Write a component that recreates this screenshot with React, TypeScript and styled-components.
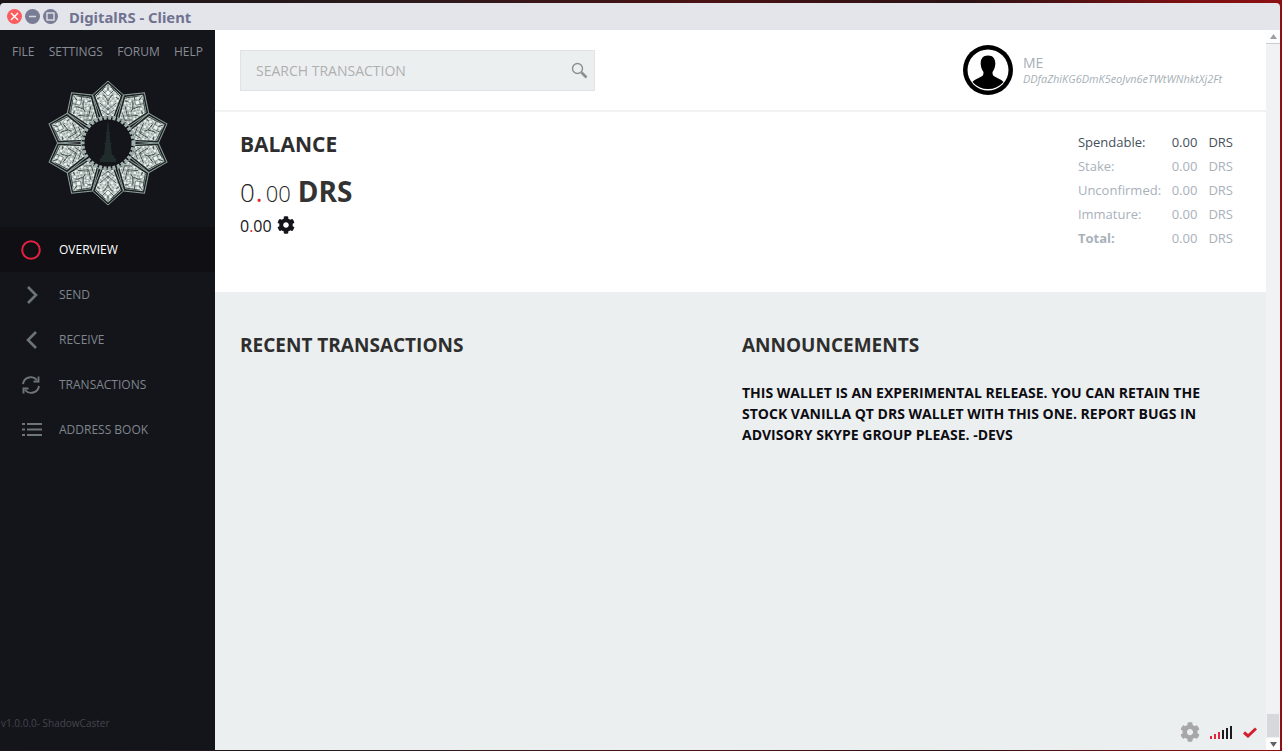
import { Fragment } from 'react';
import styled, { createGlobalStyle } from 'styled-components';
import { FaCog } from 'react-icons/fa';

const GlobalStyle = createGlobalStyle`
  html, body {
    margin: 0;
    padding: 0;
    height: 100%;
    overflow: hidden;
    background: #1d1416;
  }
  * {
    box-sizing: border-box;
  }
`;

const Desktop = styled.div`
  width: 1282px;
  height: 751px;
  padding: 3px 2px 1px 0;
  display: flex;
  background: linear-gradient(90deg, #1c1517 0%, #2a1a1c 30%, #4a1214 55%, #2a1214 75%, #7a1012 92%, #8c1014 100%);
  font-family: 'Open Sans', 'Noto Sans', sans-serif;
`;

const Window = styled.div`
  flex: 1;
  display: flex;
  flex-direction: column;
  min-width: 0;
  border-radius: 4px 4px 0 0;
  overflow: hidden;
`;

const TitleBar = styled.div`
  height: 27px;
  flex: none;
  display: flex;
  align-items: center;
  padding-left: 7px;
  background: #e4e5ea;
`;

const WinButton = styled.div<{ $color: string }>`
  width: 15px;
  height: 15px;
  margin-right: 3px;
  border-radius: 50%;
  background: ${({ $color }) => $color};
  display: flex;
  align-items: center;
  justify-content: center;
`;

const WinTitle = styled.span`
  margin-left: 8px;
  font-family: 'Noto Sans', 'Open Sans', sans-serif;
  font-weight: 700;
  font-size: 14.8px;
  color: #6f7290;
`;

const Columns = styled.div`
  flex: 1;
  display: flex;
  min-height: 0;
`;

const Sidebar = styled.aside`
  width: 215px;
  flex: none;
  display: flex;
  flex-direction: column;
  background: #14141b;
`;

const TopMenu = styled.div`
  display: flex;
  justify-content: space-between;
  padding: 14px 12px 0;
  font-size: 12px;
  line-height: 16px;
  color: #878d94;
`;

const LogoWrap = styled.div`
  height: 161px;
  padding-top: 20px;
  padding-left: 45px;
`;

const Nav = styled.nav`
  display: flex;
  flex-direction: column;
  margin-top: 6px;
`;

const NavRow = styled.div<{ $active?: boolean }>`
  height: 45px;
  display: flex;
  align-items: center;
  font-size: 12px;
  background: ${({ $active }) => ($active ? '#0f0f14' : 'transparent')};
  color: ${({ $active }) => ($active ? '#ffffff' : '#7f868c')};
`;

const NavIcon = styled.div`
  width: 59px;
  padding-left: 21px;
  display: flex;
  align-items: center;
`;

const Version = styled.div`
  margin-top: auto;
  padding: 0 0 20px 1px;
  font-size: 10px;
  line-height: 14px;
  color: #45464c;
`;

const Main = styled.main`
  flex: 1;
  min-width: 0;
  display: flex;
  flex-direction: column;
  background: #eceff0;
`;

const Header = styled.header`
  height: 82px;
  flex: none;
  display: flex;
  align-items: center;
  justify-content: space-between;
  padding: 0 0 0 25px;
  background: #fff;
  border-bottom: 2px solid #f1f2f2;
`;

const SearchBox = styled.div`
  width: 355px;
  height: 41px;
  display: flex;
  align-items: center;
  padding: 0 6px 0 15px;
  background: #eceff0;
  border: 1px solid #e0e2e3;
`;

const SearchInput = styled.input`
  flex: 1;
  min-width: 0;
  padding: 0;
  border: none;
  outline: none;
  background: transparent;
  font-family: inherit;
  font-size: 14px;
  color: #aaaaaa;

  &::placeholder {
    color: #aeb0b1;
    opacity: 1;
  }
`;

const Account = styled.div`
  width: 303px;
  display: flex;
  align-items: center;
`;

const AccountText = styled.div`
  margin-left: 10px;
  margin-top: -1px;
`;

const AccountName = styled.div`
  font-size: 14px;
  line-height: 17px;
  color: #a6b0b5;
`;

const AccountAddress = styled.div`
  font-size: 10.95px;
  line-height: 15px;
  font-style: italic;
  color: #a6b0b5;
`;

const BalancePanel = styled.section`
  height: 180px;
  flex: none;
  display: flex;
  justify-content: space-between;
  padding: 18px 33px 0 25px;
  background: #fff;
`;

const SectionTitle = styled.h2`
  margin: 0;
  font-size: 19px;
  line-height: 27px;
  font-weight: 700;
  color: #2e2e2e;
`;

const BalanceTitle = styled(SectionTitle)`
  font-size: 21px;
  line-height: 28px;
`;

const BalanceValue = styled.div`
  margin-top: 14px;
  display: flex;
  align-items: baseline;
  line-height: 38px;
  color: #222;
`;

const BigDigit = styled.span`
  font-size: 26px;
  font-weight: 300;
`;

const RedDot = styled.span`
  font-size: 26px;
  font-weight: 400;
  color: #e8222c;
  margin: 0 3px 0 1px;
`;

const SmallDigits = styled.span`
  font-size: 22px;
  font-weight: 300;
`;

const Unit = styled.span`
  margin-left: 7px;
  font-size: 28px;
  font-weight: 700;
  color: #333;
`;

const FiatRow = styled.div`
  display: flex;
  align-items: center;
  margin-top: 2px;
  font-size: 16px;
  line-height: 24px;
  color: #14141b;
`;

const FiatRed = styled.span`
  color: #e8222c;
`;

const FiatGear = styled(FaCog)`
  margin-left: 5px;
  width: 18px;
  height: 18px;
  margin-top: -2px;
`;

const Stats = styled.div`
  display: grid;
  grid-template-columns: 84.5px 35px auto;
  grid-auto-rows: 24px;
  align-items: center;
  font-size: 13px;
`;

const StatCell = styled.div<{ $strong?: boolean; $bold?: boolean; $right?: boolean; $unit?: boolean }>`
  padding-left: ${({ $unit }) => ($unit ? '11px' : '0')};
  color: ${({ $strong }) => ($strong ? '#45505a' : '#a9b1bb')};
  font-weight: ${({ $bold }) => ($bold ? 700 : 400)};
  text-align: ${({ $right }) => ($right ? 'right' : 'left')};
`;

const Lower = styled.section`
  flex: 1;
  min-height: 0;
  display: flex;
  flex-direction: column;
  padding: 40px 0 0 25px;
`;

const LowerColumns = styled.div`
  display: grid;
  grid-template-columns: 502px 480px;
`;

const Notice = styled.p`
  margin: 23px 0 0;
  font-size: 14px;
  line-height: 21px;
  font-weight: 700;
  color: #0c0c12;
`;

const StatusBar = styled.div`
  margin-top: auto;
  padding: 0 9px 8px 0;
  display: flex;
  align-items: center;
  justify-content: flex-end;
`;

const StatusGear = styled(FaCog)`
  width: 20px;
  height: 20px;
  color: #a7a7a7;
`;

const Signal = styled.div`
  display: flex;
  align-items: flex-end;
  gap: 2px;
  height: 14px;
  margin: 0 11px 0 10px;
`;

const SignalBar = styled.span<{ $on?: boolean; $height: number }>`
  width: 2px;
  height: ${({ $height }) => $height}px;
  background: ${({ $on }) => ($on ? '#e5243f' : '#1a1a22')};
`;

const Scrollbar = styled.div`
  width: 14px;
  flex: none;
  display: flex;
  flex-direction: column;
  background: #f1f2f3;
`;

const ScrollButton = styled.div`
  height: 14px;
  flex: none;
  display: flex;
  align-items: center;
  justify-content: center;
  background: #fdfdfd;
  border-bottom: 1px solid #c8ced1;
`;

const ScrollThumb = styled.div`
  height: 25px;
  flex: none;
  margin-top: auto;
  background: #d5d9dc;
  border: 1px solid #eef0f1;
`;

const ScrollButtonBottom = styled(ScrollButton)`
  height: 12px;
  border-bottom: none;
`;

const petalShape = 'M0 -59.5 L13 -47.5 L5.5 -27 L-5.5 -27 L-13 -47.5 Z';

// dark ornament lines on each petal, mirrored round the axis
const petalLines = [
  'M-12 -47 L-3 -56 M12 -47 L3 -56',
  'M-6 -53 L0 -47 L6 -53',
  'M-11 -44 L-4 -48 L0 -42 L4 -48 L11 -44',
  'M-8 -40 L0 -33 L8 -40',
  'M-6 -33 L0 -28 L6 -33',
  'M0 -58 L0 -52 M0 -42 L0 -34',
];

const petalSpots = [
  [0, -50, 3],
  [-7, -47, 2.4],
  [7, -47, 2.4],
  [-4, -40, 2.4],
  [4, -40, 2.4],
  [0, -37, 1.8],
  [0, -31, 2],
];

const Logo = () => (
  <svg width="126" height="126" viewBox="-63 -63 126 126">
    <defs>
      <pattern id="petalGrain" width="3.4" height="3.4" patternUnits="userSpaceOnUse" patternTransform="rotate(45)">
        <rect width="3.4" height="3.4" fill="#c5d0cc" />
        <rect width="1.7" height="1.7" fill="#f2f6f4" />
        <rect x="2.2" y="2.2" width="1" height="1" fill="#4f5f5b" />
      </pattern>
    </defs>
    {Array.from({ length: 10 }).map((_, i) => (
      <g key={i} transform={`rotate(${i * 36})`}>
        <path d="M0 -62 L15.5 -48 L7 -26 L-7 -26 L-15.5 -48 Z" fill="#1b2221" stroke="#8fa09c" strokeWidth="1" />
        <path d={petalShape} fill="url(#petalGrain)" />
        {petalLines.map((d) => (
          <path key={d} d={d} fill="none" stroke="#3d4a48" strokeWidth="0.9" />
        ))}
        {petalSpots.map(([x, y, r]) => (
          <path
            key={`${x}${y}`}
            d={`M${x} ${y - r} L${x + r} ${y} L${x} ${y + r} L${x - r} ${y} Z`}
            fill="#eef3f1"
            stroke="#6f817c"
            strokeWidth="0.5"
          />
        ))}
      </g>
    ))}
    <circle r="25.5" fill="none" stroke="#9fb0ab" strokeWidth="4" strokeDasharray="3 1.6" />
    <circle r="23" fill="#14141b" />
    <path
      d="M-0.6 -20 L0.6 -20 L1.2 -11 L2.2 -11 L2.2 -9.5 L1.6 -9.5 L2.4 0 L3.6 0 L3.6 1.6 L2.8 1.6 L4 12 L6 12 L6 15 L8 15 L8 19 L-8 19 L-8 15 L-6 15 L-6 12 L-4 12 L-2.8 1.6 L-3.6 1.6 L-3.6 0 L-2.4 0 L-1.6 -9.5 L-2.2 -9.5 L-2.2 -11 L-1.2 -11 Z"
      fill="#202c2b"
    />
  </svg>
);

const RingIcon = () => (
  <svg width="20" height="20" viewBox="0 0 20 20">
    <circle cx="10" cy="10" r="8.8" fill="none" stroke="#e0213f" strokeWidth="2" />
  </svg>
);

const ChevronIcon = ({ left }: { left?: boolean }) => (
  <svg width="22" height="20" viewBox="0 0 22 20">
    <path d={left ? 'M15 2 L7 10 L15 18' : 'M7 2 L15 10 L7 18'} fill="none" stroke="#6c7579" strokeWidth="2.6" />
  </svg>
);

const SyncIcon = () => (
  <svg width="20" height="20" viewBox="1 0 20 20" fill="none" stroke="#6c7579" strokeWidth="1.9">
    <path d="M3 9 A8 8 0 0 1 17 5" />
    <path d="M18.5 1.5 L18.5 6.5 L13.5 6.5" />
    <path d="M19 11 A8 8 0 0 1 5 15" />
    <path d="M3.5 18.5 L3.5 13.5 L8.5 13.5" />
  </svg>
);

const ListIcon = () => (
  <svg width="22" height="14" viewBox="0 0 22 14" fill="#6c7579">
    <rect x="1" y="0" width="3" height="2" />
    <rect x="6" y="0" width="15" height="2" />
    <rect x="1" y="5.5" width="3" height="2" />
    <rect x="6" y="5.5" width="15" height="2" />
    <rect x="1" y="11" width="3" height="2" />
    <rect x="6" y="11" width="15" height="2" />
  </svg>
);

const SearchGlyph = () => (
  <svg width="17" height="17" viewBox="0 0 17 17" fill="none" stroke="#8c8f90">
    <circle cx="6.5" cy="6.5" r="5" strokeWidth="1.4" />
    <path d="M10.5 10.5 L15.5 15.5" strokeWidth="2.6" />
  </svg>
);

const Avatar = () => (
  <svg width="50" height="50" viewBox="0 0 50 50">
    <circle cx="25" cy="25" r="25" fill="#000" />
    <circle cx="25" cy="25" r="20.5" fill="#fff" />
    <path
      d="M25 10.5 C19.5 10.5 17.4 14.5 17.7 19 C17.9 22 18.8 24.5 20.2 26.5 C20.7 27.5 20.6 29.5 19.8 30.5 C18 32.5 12.5 33.5 9.5 37 A20.5 20.5 0 0 0 40.5 37 C37.5 33.5 32 32.5 30.2 30.5 C29.4 29.5 29.3 27.5 29.8 26.5 C31.2 24.5 32.1 22 32.3 19 C32.6 14.5 30.5 10.5 25 10.5 Z"
      fill="#000"
    />
  </svg>
);

const CheckIcon = () => (
  <svg width="14" height="11" viewBox="0 0 14 11">
    <path d="M1 5.5 L5 9 L13 1.5" fill="none" stroke="#d3202f" strokeWidth="3" />
  </svg>
);

const navItems = [
  { label: 'OVERVIEW', icon: <RingIcon />, active: true },
  { label: 'SEND', icon: <ChevronIcon /> },
  { label: 'RECEIVE', icon: <ChevronIcon left /> },
  { label: 'TRANSACTIONS', icon: <SyncIcon /> },
  { label: 'ADDRESS BOOK', icon: <ListIcon /> },
];

const stats = [
  { label: 'Spendable:', strong: true },
  { label: 'Stake:' },
  { label: 'Unconfirmed:' },
  { label: 'Immature:' },
  { label: 'Total:', bold: true },
];

const App = () => (
  <Desktop>
    <GlobalStyle />
    <Window>
      <TitleBar>
        <WinButton $color="#fb5d5f">
          <svg width="9" height="9" viewBox="0 0 9 9">
            <path d="M1 1 L8 8 M8 1 L1 8" stroke="#fff" strokeWidth="1.4" />
          </svg>
        </WinButton>
        <WinButton $color="#787c94">
          <svg width="9" height="9" viewBox="0 0 9 9">
            <path d="M1 4.5 L8 4.5" stroke="#d8d9e0" strokeWidth="1.6" />
          </svg>
        </WinButton>
        <WinButton $color="#787c94">
          <svg width="9" height="9" viewBox="0 0 9 9">
            <rect x="1" y="1" width="7" height="7" fill="none" stroke="#e0e1e8" strokeWidth="1.4" />
          </svg>
        </WinButton>
        <WinTitle>DigitalRS - Client</WinTitle>
      </TitleBar>
      <Columns>
        <Sidebar>
          <TopMenu>
            <span>FILE</span>
            <span>SETTINGS</span>
            <span>FORUM</span>
            <span>HELP</span>
          </TopMenu>
          <LogoWrap>
            <Logo />
          </LogoWrap>
          <Nav>
            {navItems.map((item) => (
              <NavRow key={item.label} $active={item.active}>
                <NavIcon>{item.icon}</NavIcon>
                {item.label}
              </NavRow>
            ))}
          </Nav>
          <Version>v1.0.0.0- ShadowCaster</Version>
        </Sidebar>
        <Main>
          <Header>
            <SearchBox>
              <SearchInput placeholder="SEARCH TRANSACTION" readOnly />
              <SearchGlyph />
            </SearchBox>
            <Account>
              <Avatar />
              <AccountText>
                <AccountName>ME</AccountName>
                <AccountAddress>DDfaZhiKG6DmK5eoJvn6eTWtWNhktXj2Ft</AccountAddress>
              </AccountText>
            </Account>
          </Header>
          <BalancePanel>
            <div>
              <BalanceTitle>BALANCE</BalanceTitle>
              <BalanceValue>
                <BigDigit>0</BigDigit>
                <RedDot>.</RedDot>
                <SmallDigits>00</SmallDigits>
                <Unit>DRS</Unit>
              </BalanceValue>
              <FiatRow>
                <span>
                  0<FiatRed>.</FiatRed>00
                </span>
                <FiatGear />
              </FiatRow>
            </div>
            <Stats>
              {stats.map((row) => (
                <Fragment key={row.label}>
                  <StatCell $strong={row.strong} $bold={row.bold}>
                    {row.label}
                  </StatCell>
                  <StatCell $strong={row.strong} $right>
                    0.00
                  </StatCell>
                  <StatCell $strong={row.strong} $unit>
                    DRS
                  </StatCell>
                </Fragment>
              ))}
            </Stats>
          </BalancePanel>
          <Lower>
            <LowerColumns>
              <SectionTitle>RECENT TRANSACTIONS</SectionTitle>
              <div>
                <SectionTitle>ANNOUNCEMENTS</SectionTitle>
                <Notice>
                  THIS WALLET IS AN EXPERIMENTAL RELEASE. YOU CAN RETAIN THE STOCK VANILLA QT DRS WALLET WITH THIS ONE.
                  REPORT BUGS IN ADVISORY SKYPE GROUP PLEASE. -DEVS
                </Notice>
              </div>
            </LowerColumns>
            <StatusBar>
              <StatusGear />
              <Signal>
                {[3, 5, 7, 9, 11, 13].map((h, i) => (
                  <SignalBar key={h} $height={h} $on={i < 3} />
                ))}
              </Signal>
              <CheckIcon />
            </StatusBar>
          </Lower>
        </Main>
        <Scrollbar>
          <ScrollButton>
            <svg width="7" height="5" viewBox="0 0 7 5">
              <path d="M3.5 0 L7 5 L0 5 Z" fill="#9a9fa3" />
            </svg>
          </ScrollButton>
          <ScrollThumb />
          <ScrollButtonBottom>
            <svg width="7" height="5" viewBox="0 0 7 5">
              <path d="M0 0 L7 0 L3.5 5 Z" fill="#5d6468" />
            </svg>
          </ScrollButtonBottom>
        </Scrollbar>
      </Columns>
    </Window>
  </Desktop>
);

export default App;
